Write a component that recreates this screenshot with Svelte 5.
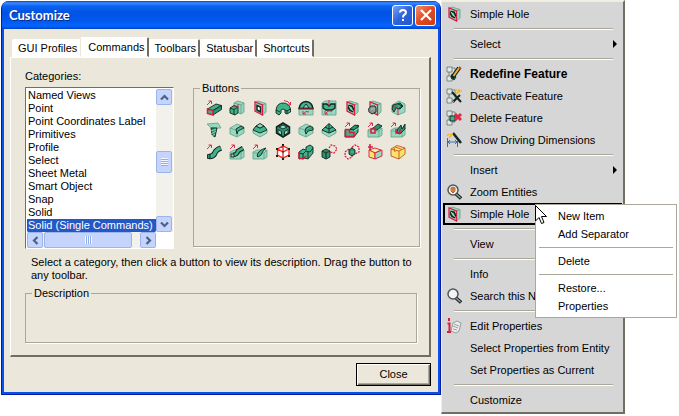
<script>
  const K = '#12241e', G = '#3fb48a', L = '#98d8c0', D = '#2c9472', R = '#d81c40', W = '#ffffff', N = 'none';
  const Y = '#f8e468', GR = '#8c9494', S = '#6ca48f';

  // each shape: [path, fill, stroke, stroke width]
  const arrow = [['M1 5L5 1M2.500 1H5.500V4', N, R]];
  const plate = [
    ['M3 2L6 1L14 3.500L10.500 5z', L, S], ['M10.500 5L14 3.500V12L10.500 15z', L, S], ['M3 2L10.500 5V15L3 11z', L, R, 1.300]
  ];
  const hole = [...plate, ['M5 5.500L8 6L9.500 9L8.500 11.500L6 10.500L4.500 8z', G, K, 1.500], ['M5 6L9 11', N, W, 0.700]];
  const box = [
    ['M1 6L8 2L15 5V11L8 15L1 12z', L, S], ['M1 6L8 8.500L15 5M8 8.500V15', N, S]
  ];
  const slab = [['M1 8L5 6H15V13L12 15H1z', L, S], ['M1 9H12V15M12 9L15 6', N, S]];

  const tools = [
    ['Protrusion', [...arrow, ['M1.500 9L10 4L15.500 5.500L7 10.500z', G, K], ['M7 10.500L15.500 5.500V9.500L7 15z', D, K], ['M1.500 9L7 10.500V15L1.500 13.500z', G, R, 1.500]]],
    ['Boss', [['M5 3L9 1L15 3V12L12 14L5 11z', L, S], ['M12 5V14M5 3L12 5L15 3', N, S], ['M1 8L5 5.500L9 7V13L6 15L1 13z', G, K], ['M1 8L5 9.500V15M5 9.500L9 7', N, K], ['M9 4V8L5 6', N, R]]],
    ['Cutout', [...plate, ['M5 5.500L8.500 7V12L5 10z', W, K, 1.500]]],
    ['Revolve', [['M1 10Q2 3 8 3Q14 3 15.500 9V12L12 14L10 13V10Q8 8 6 10V13L4 15L1 13z', G, K], ['M1 10L5 12M10 10L12 11L15 9M12 11V14', N, K], ['M9 .5Q14 1 15.500 5M12 5H15.500V2', N, R]]],
    ['Revolved cut', [['M1 9Q2 2 8 1.500Q14 2 15 9V15H1z', L, S], ['M1 8.500Q2 2 8 1.500Q14 2 15 8.500z', G, K, 1.500], ['M5 8L8 4L11 8z', L, K], ['M1 9H15M5 14Q8 10 11 12M5 11V14H8', N, R]]],
    ['Circular slot', [['M1 3L4 1H15V15H1z', L, S], ['M2 4H6L8 6L10 4H14V8L11 10H5L2 8z', G, K, 1.300], ['M8 0V7M4 14Q8 9 11 12M4 11V14H7', N, R]]],
    ['Simple hole', hole],
    ['Cylinder boss', [...plate, ['M1.500 9L4 6H8L9 8V12L5 14L2 12z', GR, K], ['M4 9H8', N, L]]],
    ['Compound hole', [['M2 5L9 1L15 4V12L8 15L2 12z', L, S], ['M3 5L10 3L13 6L10 9L6 8L4 12L2 9z', D, K], ['M8 4L12 6L8 9', G, K], ['M3 6L8 9V15', N, R]]],

    ['Thread', [['M1 2L12 1L15 6H5z', L, S], ['M5 6H11L9 15L6 13z', D, K], ['M5 9L10 7M5 12L10 9M6 14L9 12', N, L]]],
    ['Edge blend', [...box, ['M7 7L12 4L15 6L9 9L8 12z', G, K]]],
    ['Face blend', [['M1 8L4 4L8 2L12 4L15 8V11L8 15L1 11z', L, S], ['M1 8L4 4L8 6L12 4L15 8L8 11z', G, K], ['M4 4L8 1.500L12 4L8 6z', L, K]]],
    ['Shell', [['M1.500 5L8 1L14.500 5V11L8 15L1.500 11z', D, K, 1.500], ['M4 5L8 3L12 5L8 7z', L, K], ['M3 7.500L6.500 9.500V13L3 11zM9.500 9.500L13 7.500V11L9.500 13z', L, K]]],
    ['Chamfer', [...box, ['M8 6L12 4L15 6V8L10 9L8 12L7 9z', G, K], ['M8 9L14 6', N, D]]],
    ['Draft', [['M1 8L8 11L15 8V11L8 15L1 11z', L, S], ['M1 8L8 1.500L15 8L8 11z', G, K], ['M8 2V11M4 5L8 7L12 5', N, K]]],
    ['Extrude solid', [...arrow, ['M1 8H6L14 3V10L10 15H1z', G, K], ['M6 7L11 3L15 4L10 8z', D, K], ['M10 9L15 6', N, L], ['M1.500 7.500H5.500V10.500H10V14.500H1.500z', G, R, 1.500]]],
    ['Extrude cut', [...arrow, ...slab, ['M5 7L11 2L15 4L10 8z', D, K], ['M4 7H8V11H4z', L, R, 1.500]]],
    ['Extrude slot', [...arrow, ...slab, ['M7 8L11 3L12 7L15 2V7L10 12L7 11z', D, K], ['M6 7V11H10V7', N, R, 1.500]]],

    ['Sweep', [...arrow, ['M3 12.500Q8 12.500 9 8.500Q10 6 15 4', N, K, 5.500], ['M3 12.500Q8 12.500 9 8.500Q10 6 14.500 4', N, G, 3.500], ['M1.500 10.500H4V14.500H1.500z', D, K]]],
    ['Swept boss', [...arrow, ...slab, ['M4 11Q8 11 9 7L14 4', N, K, 4.500], ['M4 11Q8 11 9 7L14 4', N, G, 2.500], ['M2 10H5V13H2z', L, K]]],
    ['Swept cut', [...arrow, ...slab, ['M5 12Q6 6 14 4Q11 6 9 11L6 13z', G, K]]],
    ['Wire solid', [['M2.500 5L8 2L14 5V11L8 14L2.500 11zM2.500 5L8 8L14 5M8 8V14M8 2V8', W, '#f02020', 1.300], ['M7 1H9M1 5H3M13 5H15M1 12H3M13 12H15M7 15H9M7.500 8H8.500', N, K, 2]]],
    ['Union', [['M1 8L5 5L8 6V3L12 1L15 3V9L10 15L6 14L1 15z', G, K], ['M1 9L5 10L8 7L12 8L15 4M5 10V15M10 8V14', N, K], ['M1 8V14L5 15L8 12', N, R, 1.500]]],
    ['Subtract', [['M1 7L5 5L9 7V13L5 15L1 13z', D, K], ['M1 7L5 9L9 7M5 9V15', N, K], ['M8 4L10 1L14 2L16 5L13 9L9 8', N, R, 1.200, '2 1'], ['M4 7L8 8', N, R]]],
    ['Intersect', [['M8 3L11 1L15 3V8L11 10L8 8zM1 8L5 5L8 8V13L4 15L1 12z', N, R, 1.200, '2 1'], ['M5 6L8 4L11 6V10L8 12L5 10z', D, K], ['M7 8H10', N, G, 2]]],
    ['Move solid', [['M2 6L8 4L14 6L8 9z', '#fbf0a0', R], ['M2 6L8 9V15L2 13z', Y, R], ['M8 9L15 6V12L8 15z', L, R], ['M3 0V6M1 3H6', N, R, 1.500]]],
    ['Solid box', [['M1 5L7 1.500L15 4V10L9 15L1 12z', Y, '#c85020'], ['M1 5L9 7L15 4M9 7V15M5 3L12 5.500M4 4L5 8', '#fbf0a0', '#c85020']]]
  ];

  const parts = [['M1 1H6V6H1zM1 10H6V15H1zM6 2H9V7M3 6V10M6 12H9V8', '#dfe8e4', '#6c8078']];
  const lens = [['M9.500 9.500L15 14.500', N, K, 3.500], ['M10 10L14.500 14', N, '#999999', 1.500], ['M2 6A5 5 0 1 1 12 6A5 5 0 1 1 2 6z', '#f0f6f8', '#555555', 1.500]];
  const icons = {
    hole,
    redefine: [...parts, ['M6 8L10 11L8 14L5 12z', D, K], ['M6 12L13 2', N, K, 4], ['M7.500 10L13 2', N, '#eba944', 2], ['M13 1L15 3', N, '#b8501c', 2]],
    off: [...parts, ['M6 4L15 14M14 7L7 14', N, K, 2], ['M9 2H11M13 1V5M11 3H16M10 6L12 4', N, '#f1b928', 1.500], ['M7 13L9 15', N, '#d77aaa']],
    remove: [...parts, ['M4 6H9V11H4z', G, K], ['M9 4L15 10M15 4L9 10', N, '#e02848', 3]],
    dims: [['M1.500 6V15M11.500 9V15M2 10H11M2 10L4 8M2 10L4 12M11 10L9 8M11 10L9 12', N, '#30629b'], ['M7 1L15 11', N, K, 2.500], ['M1 4L3 2M4 2L6 4M3 6L5 4M6 1V3', N, '#f1b928', 1.500]],
    zoom: [...lens, ['M5 4L7 3L9 4V7L7 9L5 7zM5 4L7 5L9 4M7 5V9', '#f2b04c', '#b8501c']],
    search: lens,
    edit: [['M2 1.500H4', N, R, 3], ['M1.500 5.500H3.500V13M1 14H5', N, R, 2], ['M7 5L11 3L15 5L13 13L10 15L5 13z', '#eeeeee', GR], ['M8 6L13 8M7 8L12 10M7 11L11 12', N, GR]]
  };

  const menu = [
    ['Simple Hole', 'hole'], null, ['Select', '', 'sub'], null,
    ['Redefine Feature', 'redefine', 'bold'], ['Deactivate Feature', 'off'], ['Delete Feature', 'remove'], ['Show Driving Dimensions', 'dims'], null,
    ['Insert', '', 'sub'], ['Zoom Entities', 'zoom'], ['Simple Hole', 'hole', 'framed'], null,
    ['View', ''], null, ['Info', ''], ['Search this Name', 'search'], null,
    ['Edit Properties', 'edit'], ['Select Properties from Entity', ''], ['Set Properties as Current', ''], null, ['Customize', '']
  ];
  const popup = ['New Item', 'Add Separator', null, 'Delete', null, 'Restore...', 'Properties'];
  const tabs = ['GUI Profiles', 'Commands', 'Toolbars', 'Statusbar', 'Shortcuts'];
  const categories = ['Named Views', 'Point', 'Point Coordinates Label', 'Primitives', 'Profile', 'Select', 'Sheet Metal', 'Smart Object', 'Snap', 'Solid', 'Solid (Single Commands)'];

  let tab = $state('Commands');
  let category = $state('Solid (Single Commands)');
</script>

{#snippet icon(shapes)}
  <svg class="icon" viewBox="0 0 16 16" aria-hidden="true">
    {#each shapes as [d, fill, stroke, width = 0.9, dash = 'none']}
      <path {d} {fill} {stroke} stroke-width={width} stroke-dasharray={dash} />
    {/each}
  </svg>
{/snippet}

{#snippet chevron(d)}
  <svg class="chevron" viewBox="0 0 9 9" aria-hidden="true"><path {d} fill="none" stroke="#4d6185" stroke-width="2.200" /></svg>
{/snippet}

<main>
  <section class="dialog" aria-label="Customize">
    <header>
      <h1>Customize</h1>
      <button class="caption help" aria-label="Help">
        <svg viewBox="0 0 14 14"><path d="M4 4.500Q4 2 7 2Q10 2 10 4.500Q10 6 8 7Q7 7.500 7 9.500M7 11V13" fill="none" stroke="#fff" stroke-width="2" /></svg>
      </button>
      <button class="caption close" aria-label="Close window">
        <svg viewBox="0 0 14 14"><path d="M2 2L12 12M12 2L2 12" fill="none" stroke="#fff" stroke-width="2.200" /></svg>
      </button>
    </header>

    <div class="body">
      <div class="tabs" role="tablist">
        {#each tabs as name}
          <button role="tab" class:active={tab === name} aria-selected={tab === name} onclick={() => (tab = name)}>{name}</button>
        {/each}
      </div>

      <div class="panel" role="tabpanel">
        <div class="columns">
          <div class="left">
            <label for="categories">Categories:</label>
            <div class="listbox">
              <select id="categories" size="11" bind:value={category}>
                {#each categories as name}<option value={name}>{name}</option>{/each}
              </select>
              <div class="track vertical">
                <button aria-label="Scroll up">{@render chevron('M1 6.500L4.500 3L8 6.500')}</button>
                <span class="thumb"></span>
                <button aria-label="Scroll down">{@render chevron('M1 2.500L4.500 6L8 2.500')}</button>
              </div>
              <div class="track horizontal">
                <button aria-label="Scroll left">{@render chevron('M6.500 1L3 4.500L6.500 8')}</button>
                <span class="thumb"></span>
                <button aria-label="Scroll right">{@render chevron('M2.500 1L6 4.500L2.500 8')}</button>
              </div>
            </div>
          </div>

          <fieldset class="buttons">
            <legend>Buttons</legend>
            <div class="tools">
              {#each tools as [name, shapes]}
                <button aria-label={name}>{@render icon(shapes)}</button>
              {/each}
            </div>
          </fieldset>
        </div>

        <p>Select a category, then click a button to view its description. Drag the button to any toolbar.</p>
        <fieldset class="description"><legend>Description</legend></fieldset>
      </div>

      <footer><button class="push">Close</button></footer>
    </div>
  </section>

  <div class="menu" role="menu">
    {#each menu as item}
      {#if item}
        <button role="menuitem" class="item {item[2] ?? ''}">
          <span class="gutter">{#if item[1]}{@render icon(icons[item[1]])}{/if}</span>
          <span class="text">{item[0]}</span>
        </button>
      {:else}
        <hr />
      {/if}
    {/each}

    <div class="popup" role="menu">
      {#each popup as name}
        {#if name}<button role="menuitem">{name}</button>{:else}<hr />{/if}
      {/each}
    </div>
    <svg class="cursor" viewBox="0 0 12 20" aria-hidden="true">
      <path d="M.5.5V16L4 12.500L6.500 18.500L9 17.500L6.500 11.500H11.500z" fill="#fff" stroke="#000" />
    </svg>
  </div>
</main>

<style>
  :global(body) { background: #fff; }
  main {
    display: flex;
    align-items: flex-start;
    padding-right: 54px;
    font: 11px/13px "Liberation Sans", Arial, sans-serif;
    color: #000;
  }
  button { font: inherit; color: inherit; padding: 0; margin: 0; border: 0; background: none; }
  svg { display: block; }
  .icon { width: 16px; height: 16px; flex: none; }

  .dialog {
    flex: 1;
    min-width: 0;
    margin: 1px 0 0 1px;
    border: 1px solid #001ea0;
    border-top: 0;
    border-radius: 8px 8px 0 0;
    background: #0a50ea;
    overflow: hidden;
    padding: 0 2px 2px;
  }
  header {
    display: flex;
    align-items: center;
    gap: 2px;
    height: 28px;
    margin: 0 -2px;
    padding: 0 4px 0 7px;
    background: linear-gradient(#0a40c8 0, #3c8cff 2px, #0a62f0 5px, #0052e2 12px, #0458f0 20px, #0066fe 25px, #0040c4 28px);
  }
  h1 { flex: 1; margin: 0; font: bold 13px/18px Lato, sans-serif; color: #fff; text-shadow: 1px 1px #0a2c88; }
  .caption {
    display: grid;
    place-items: center;
    width: 21px;
    height: 21px;
    border: 1px solid #fff;
    border-radius: 3px;
    background: linear-gradient(135deg, #7ba2ef, #2c63dd 50%, #2458cf);
  }
  .caption svg { width: 14px; height: 14px; }
  .caption.close { background: linear-gradient(135deg, #f0906c, #e04a22 50%, #cc3c14); }

  .body { background: #ebe8db; padding: 8px 7px 6px 6px; }
  .tabs { display: flex; align-items: flex-end; padding-left: 2px; }
  .tabs button {
    height: 18px;
    padding: 0 2px 0 5px;
    background: #fff;
    border: 1px solid #fff;
    border-right: 2px solid #716f64;
    border-radius: 2px 2px 0 0;
  }
  .tabs button:first-child { border-right-color: #fff; margin-right: -1px; }
  .tabs .active { height: 20px; padding: 0 2px 0 7px; border-left-color: #ebe8db; }
  .panel {
    border: 1px solid #fff;
    border-right: 2px solid #716f64;
    border-bottom: 2px solid #716f64;
    padding: 12px 10px 12px 14px;
  }
  .columns { display: flex; align-items: stretch; gap: 19px; }
  .left { width: 149px; flex: none; }
  label { display: block; line-height: 13px; margin-bottom: 4px; }
  .listbox {
    display: grid;
    grid-template: 143px 16px / 1fr 17px;
    background: #fff;
    border: 1px solid;
    border-color: #716f64 #fff #fff #716f64;
    padding: 1px 0 0 1px;
  }
  select {
    width: 100%;
    height: 143px;
    border: 0;
    padding: 0;
    outline: 0;
    background: #fff;
    font: inherit;
    color: #000;
    overflow: hidden;
    scrollbar-width: none;
  }
  option { padding: 0 1px; height: 13px; min-height: 13px; line-height: 13px; white-space: nowrap; }
  option:checked { color: #fff; background: #2458c4 linear-gradient(#2458c4, #2458c4); }
  .track { display: flex; background: #f3f1ec; }
  .track button {
    display: grid;
    place-items: center;
    flex: none;
    width: 16px;
    height: 16px;
  }
  .track button, .thumb { background: #c4d4fc; border: 1px solid #9cb4ec; border-radius: 2px; box-sizing: border-box; }
  .chevron { width: 9px; height: 9px; }
  .vertical { flex-direction: column; }
  .vertical .thumb { width: 16px; height: 22px; margin: 46px 0 auto; }
  .thumb { display: grid; place-items: center; }
  .thumb::before { content: ""; width: 7px; height: 8px; background: repeating-linear-gradient(#f4f7ff 0 1px, #92aee8 1px 2px); }
  .horizontal .thumb { flex: 1; margin: 0 8px 0 1px; }
  .horizontal .thumb::before { background: repeating-linear-gradient(90deg, #f4f7ff 0 1px, #92aee8 1px 2px); }

  fieldset {
    min-width: 0;
    margin: 0;
    padding: 0;
    border: 1px solid #aca899;
    box-shadow: 1px 1px #fff;
  }
  legend { margin-left: 6px; padding: 0 2px; line-height: 13px; }
  .buttons { flex: 1; margin: 12px -1px 2px 0; }
  .tools { display: grid; grid-template-columns: repeat(9, 16px); gap: 6px 7px; padding: 5px 0 0 12px; }
  p { margin: 7px 0 5px 6px; line-height: 13px; }
  .description { height: 56px; box-sizing: border-box; margin-right: 2px; }
  footer { display: flex; justify-content: flex-end; padding-top: 6px; }
  .push {
    width: 75px;
    height: 23px;
    border: 1px solid #000;
    box-shadow: inset 1px 1px #fff, inset -1px -1px #716f64, inset -2px -2px #aca899;
  }

  .menu {
    position: relative;
    flex: none;
    width: 184px;
    box-sizing: border-box;
    padding: 1px;
    background: #d6d6d6;
    border: 1px solid #f1efe2;
    border-width: 2px 2px 2px 1px;
    border-right-color: #716f64;
    border-bottom-color: #716f64;
  }
  .item {
    position: relative;
    display: flex;
    align-items: center;
    width: 100%;
    height: 22px;
    text-align: left;
    white-space: nowrap;
    box-sizing: border-box;
  }
  .gutter { width: 27px; padding-left: 3px; box-sizing: border-box; flex: none; }
  .bold { font-weight: bold; font-size: 12px; }
  .framed { box-shadow: inset 0 0 0 2px #000; }
  .sub::after {
    content: "";
    margin-left: auto;
    margin-right: 5px;
    border: 4px solid transparent;
    border-left-color: #000;
    border-right: 0;
  }
  hr { height: 1px; margin: 3px 9px 3px 11px; border: 0; border-top: 1px solid #aca899; background: #fff; }
  .popup {
    position: absolute;
    z-index: 1;
    left: 93px;
    top: 202px;
    width: 142px;
    box-sizing: border-box;
    padding: 2px 3px;
    background: #fff;
    border: 1px solid #aca899;
  }
  .popup button { display: block; width: 100%; height: 18px; padding-left: 19px; text-align: left; }
  .popup hr { margin: 4px 0; height: 0; }
  .cursor { position: absolute; z-index: 2; left: 93px; top: 203px; width: 12px; height: 20px; }
</style>
